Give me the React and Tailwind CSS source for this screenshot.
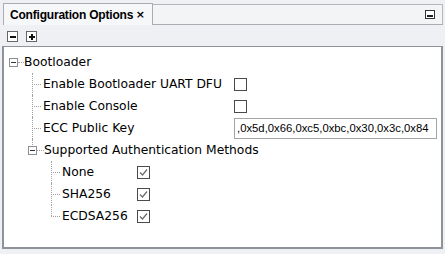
import React from 'react'

const font = { fontFamily: '"DejaVu Sans", Verdana, sans-serif' }

function Expander({ open = true }) {
  return (
    <span className="relative inline-flex h-[9px] w-[9px] shrink-0 items-center justify-center border border-[#8a8f96] bg-white">
      <span className="absolute h-px w-[5px] bg-[#333]" />
      {!open && <span className="absolute h-[5px] w-px bg-[#333]" />}
    </span>
  )
}

function Check({ checked }) {
  return (
    <span className="flex h-[13px] w-[13px] shrink-0 items-center justify-center border border-[#4a4a4a] bg-white">
      {checked && (
        <svg width="9" height="9" viewBox="0 0 9 9">
          <path d="M1 4.5 L3.5 7 L8 1.5" fill="none" stroke="#6b6b6b" strokeWidth="1.2" />
        </svg>
      )}
    </span>
  )
}

const dotV = 'border-l border-dotted border-[#a0a0a0]'
const dotH = 'border-t border-dotted border-[#a0a0a0]'

function Leaf({ label, children, labelW, last }) {
  return (
    <div className="flex h-[22px] items-center">
      <div className="relative h-full w-px shrink-0">
        <span className={'absolute left-0 top-0 w-0 ' + dotV + (last ? ' h-1/2' : ' h-full')} />
        <span className={'absolute left-0 top-1/2 w-[9px] ' + dotH} />
      </div>
      <span className={'shrink-0 whitespace-nowrap pl-[10px] text-[12.3px] text-black ' + labelW}>{label}</span>
      {children}
    </div>
  )
}

export default function App() {
  return (
    <div className="h-[254px] w-[445px] bg-[#eef0f3]" style={font}>
      {/* tab header */}
      <div className="flex h-[25px] pt-[3px] pl-[3px] pr-[2px]">
        <div className="flex h-[22px] w-[150px] items-center justify-between border border-b-0 border-[#a9adb3] bg-[#f6f7f9] pl-[6px] pr-[7px]">
          <span
            className="whitespace-nowrap text-[12px] font-bold tracking-[-0.2px] text-black"
            style={{ fontFamily: '"Liberation Sans", Arial, sans-serif' }}
          >
            Configuration Options
          </span>
          <span className="text-[11px] font-bold leading-none text-black">×</span>
        </div>
        <div className="flex flex-1 flex-col">
          <div className="mt-px flex h-[20px] items-center justify-end border-t border-r border-[#b3b7bd] bg-[#f3f4f6] pr-[7px]">
            <span className="flex h-[9px] w-[10px] items-end justify-center border border-[#333] bg-white pb-[1px]">
              <span className="h-[2px] w-[6px] bg-[#222]" />
            </span>
          </div>
          <div className="h-px bg-[#a9adb3]" />
        </div>
      </div>

      {/* toolbar */}
      <div className="flex h-[21px] items-center gap-[8px] pl-[7px] pt-[2px]">
        <span className="flex h-[11px] w-[11px] items-center justify-center border border-[#666] bg-white">
          <span className="h-[2px] w-[6px] bg-[#111]" />
        </span>
        <span className="relative flex h-[11px] w-[11px] items-center justify-center border border-[#666] bg-white">
          <span className="absolute h-[2px] w-[6px] bg-[#111]" />
          <span className="absolute h-[6px] w-[2px] bg-[#111]" />
        </span>
      </div>

      {/* tree panel */}
      <div className="mx-[2px] h-[203px] border-2 border-t-[1px] border-[#8e939b] bg-white">
        <div className="pt-[4px] pl-[5px]">
          <div className="flex h-[22px] items-center">
            <Expander />
            <span className={'w-[6px] ' + dotH} />
            <span className="text-[12.3px] text-black">Bootloader</span>
          </div>
          <div className="pl-[23px]">
            <Leaf label="Enable Bootloader UART DFU" labelW="w-[201px]">
              <Check />
            </Leaf>
            <Leaf label="Enable Console" labelW="w-[201px]">
              <Check />
            </Leaf>
            <Leaf label="ECC Public Key" labelW="w-[201px]">
              <div className="flex h-[21px] w-[203px] items-center overflow-hidden border border-[#a5a5a5] bg-white pl-[2px]">
                <span
                  className="whitespace-nowrap text-[11.3px] text-black"
                  style={{ fontFamily: '"Liberation Sans", Arial, sans-serif' }}
                >
                  ,0x5d,0x66,0xc5,0xbc,0x30,0x3c,0x84
                </span>
              </div>
            </Leaf>
            <div className="flex h-[22px] items-center">
              <div className="relative h-full w-0">
                <span className={'absolute left-0 top-0 h-[6px] w-0 ' + dotV} />
              </div>
              <span className="-ml-[4px]">
                <Expander />
              </span>
              <span className={'w-[7px] ' + dotH} />
              <span className="text-[12.3px] text-black">Supported Authentication Methods</span>
            </div>
            <div className="pl-[19px]">
              <Leaf label="None" labelW="w-[85px]">
                <Check checked />
              </Leaf>
              <Leaf label="SHA256" labelW="w-[85px]">
                <Check checked />
              </Leaf>
              <Leaf label="ECDSA256" labelW="w-[85px]" last>
                <Check checked />
              </Leaf>
            </div>
          </div>
        </div>
      </div>
    </div>
  )
}
